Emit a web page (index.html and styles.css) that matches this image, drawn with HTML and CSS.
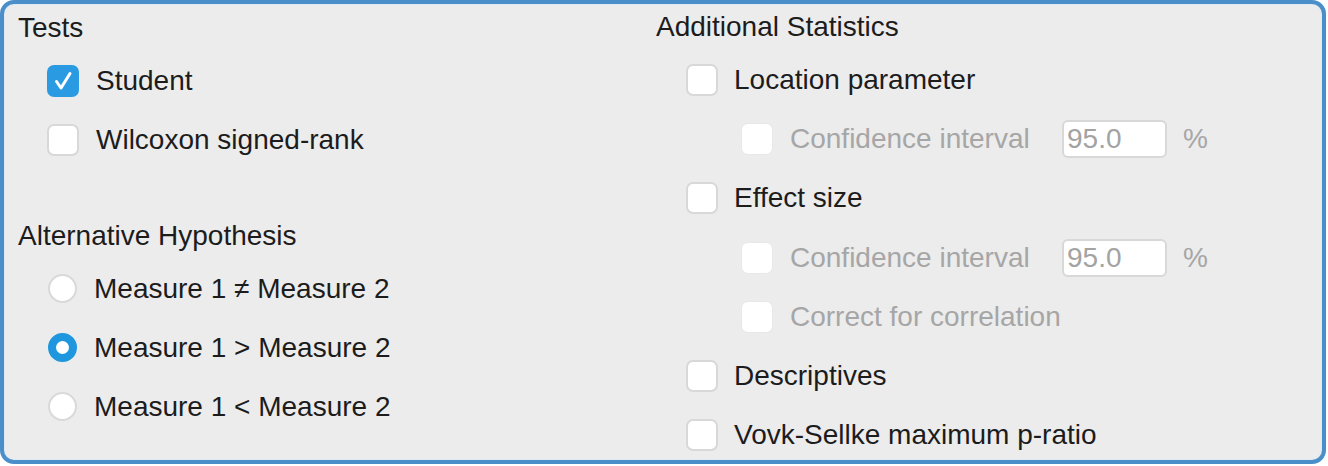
FILE: index.html
```html
<!DOCTYPE html>
<html>
<head>
<meta charset="utf-8">
<link rel="stylesheet" href="styles.css">
</head>
<body>
<div class="panel">
  <div class="col">
    <div class="header">Tests</div>
    <div class="row indent1">
      <span class="cb checked"><svg viewBox="0 0 32 32" width="32" height="32"><path d="M9.5 16.5 L14 23 L23 8.5" fill="none" stroke="#fff" stroke-width="3" stroke-linecap="round" stroke-linejoin="round"/></svg></span>
      <span class="label">Student</span>
    </div>
    <div class="row indent1">
      <span class="cb"></span>
      <span class="label">Wilcoxon signed-rank</span>
    </div>
    <div class="header spaced">Alternative Hypothesis</div>
    <div class="row indent1 radio-row">
      <span class="radio"></span>
      <span class="label">Measure 1 ≠ Measure 2</span>
    </div>
    <div class="row indent1 radio-row">
      <span class="radio on"></span>
      <span class="label">Measure 1 &gt; Measure 2</span>
    </div>
    <div class="row indent1 radio-row">
      <span class="radio"></span>
      <span class="label">Measure 1 &lt; Measure 2</span>
    </div>
  </div>
  <div class="col right">
    <div class="header">Additional Statistics</div>
    <div class="row indent1">
      <span class="cb"></span>
      <span class="label">Location parameter</span>
    </div>
    <div class="row indent2 disabled">
      <span class="cb dis"></span>
      <span class="label fixed">Confidence interval</span>
      <span class="num">95.0</span>
      <span class="pct">%</span>
    </div>
    <div class="row indent1">
      <span class="cb"></span>
      <span class="label">Effect size</span>
    </div>
    <div class="row indent2 disabled">
      <span class="cb dis"></span>
      <span class="label fixed">Confidence interval</span>
      <span class="num">95.0</span>
      <span class="pct">%</span>
    </div>
    <div class="row indent2 disabled">
      <span class="cb dis"></span>
      <span class="label">Correct for correlation</span>
    </div>
    <div class="row indent1">
      <span class="cb"></span>
      <span class="label">Descriptives</span>
    </div>
    <div class="row indent1">
      <span class="cb"></span>
      <span class="label">Vovk-Sellke maximum p-ratio</span>
    </div>
  </div>
</div>
</body>
</html>
```
FILE: styles.css
```css
* { box-sizing: border-box; }
html, body {
  margin: 0;
  padding: 0;
  background: #ffffff;
}
body {
  width: 1328px;
  height: 466px;
  font-family: "Liberation Sans", Arial, Helvetica, sans-serif;
  font-size: 28px;
  color: #1c1c1c;
}
.panel {
  width: 1326px;
  height: 464px;
  border: 4px solid #4b8fca;
  border-radius: 14px;
  background: #ececec;
  box-shadow: inset 0 0 0 1px #dfeaf4;
  display: grid;
  grid-template-columns: 638px 1fr;
  padding-left: 14px;
  overflow: hidden;
}
.col {
  display: flex;
  flex-direction: column;
}
.header {
  height: 47px;
  display: flex;
  align-items: center;
  flex-shrink: 0;
}
.right .header { height: 46px; }
.header.spaced {
  margin-top: 44px;
  height: 46px;
}
.row {
  height: 59px;
  display: flex;
  align-items: center;
  flex-shrink: 0;
}
.right .row { height: 59.3px; }
.indent1 { padding-left: 29px; }
.right .indent1 { padding-left: 30px; }
.indent2 { padding-left: 85px; }
.cb {
  width: 32px;
  height: 32px;
  border-radius: 7px;
  background: #ffffff;
  border: 2px solid #d8d8d8;
  flex-shrink: 0;
  margin-right: 17px;
  display: flex;
  align-items: center;
  justify-content: center;
}
.right .cb { margin-right: 16px; }
.cb.checked {
  background: #2a9be3;
  border: none;
}
.right .cb.dis {
  border: 1px solid #e8e8e8;
  margin-right: 17px;
}
.radio {
  width: 29px;
  height: 29px;
  border-radius: 50%;
  background: #ffffff;
  border: 2px solid #d9d9d9;
  flex-shrink: 0;
  margin-right: 17px;
  margin-left: 1px;
}
.radio.on {
  border: 8px solid #1f97de;
}
.label {
  white-space: nowrap;
}
.disabled .label { color: #a6a6a6; }
.label.fixed {
  width: 272px;
}
.num {
  width: 105px;
  height: 38px;
  border: 2px solid #d8d8d8;
  border-radius: 6px;
  background: #ffffff;
  color: #a3a3a3;
  display: flex;
  align-items: center;
  padding-left: 3px;
}
.pct {
  margin-left: 16px;
  color: #a6a6a6;
}
```
